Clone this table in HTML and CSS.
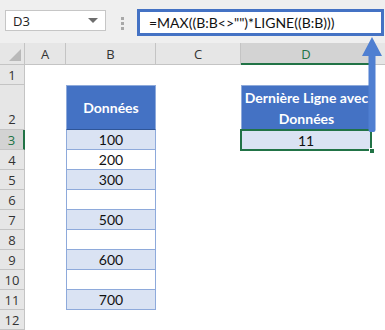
FILE: index.html
```html
<!DOCTYPE html>
<html lang="fr">
<head>
<meta charset="utf-8">
<title>Dernière ligne avec données</title>
<link rel="stylesheet" href="styles.css">
</head>
<body>
<div class="app">
  <div class="formula-bar">
    <div class="namebox">
      <span class="ref">D3</span>
      <span class="caret"></span>
    </div>
    <div class="grip"><i></i><i></i><i></i></div>
    <div class="fx">=MAX((B:B&lt;&gt;"")*LIGNE((B:B)))</div>
  </div>

  <div class="sheet">
    <!-- column headers -->
    <div class="corner"><span class="tri"></span></div>
    <div class="colhdr">A</div>
    <div class="colhdr">B</div>
    <div class="colhdr">C</div>
    <div class="colhdr sel">D</div>
    <div class="colhdr last"></div>

    <!-- row 1 -->
    <div class="rowhdr">1</div>
    <div></div><div></div><div></div><div></div><div></div>

    <!-- row 2 -->
    <div class="rowhdr bottom">2</div>
    <div></div>
    <div class="cell head top">Données</div>
    <div></div>
    <div class="cell dhead">Dernière Ligne avec<br>Données</div>
    <div></div>

    <!-- row 3 -->
    <div class="rowhdr sel">3</div>
    <div></div>
    <div class="cell band">100</div>
    <div></div>
    <div class="cell result">11<span class="handle"></span></div>
    <div></div>

    <div class="rowhdr">4</div>
    <div></div><div class="cell">200</div><div></div><div></div><div></div>

    <div class="rowhdr">5</div>
    <div></div><div class="cell band">300</div><div></div><div></div><div></div>

    <div class="rowhdr">6</div>
    <div></div><div class="cell"></div><div></div><div></div><div></div>

    <div class="rowhdr">7</div>
    <div></div><div class="cell band">500</div><div></div><div></div><div></div>

    <div class="rowhdr">8</div>
    <div></div><div class="cell"></div><div></div><div></div><div></div>

    <div class="rowhdr">9</div>
    <div></div><div class="cell band">600</div><div></div><div></div><div></div>

    <div class="rowhdr">10</div>
    <div></div><div class="cell"></div><div></div><div></div><div></div>

    <div class="rowhdr">11</div>
    <div></div><div class="cell band">700</div><div></div><div></div><div></div>

    <div class="rowhdr">12</div>
    <div></div><div></div><div></div><div></div><div></div>
  </div>

  <!-- callout arrow from the result cell up to the formula -->
  <svg class="arrow" width="22" height="96" viewBox="0 0 22 96">
    <path d="M11 0 L21 19 L14.5 19 L14.5 93 Q14.5 95 12.5 95 L9.5 95 Q7.5 95 7.5 93 L7.5 19 L1 19 Z" fill="#4f7fd1"/>
  </svg>
</div>
</body>
</html>
```

FILE: styles.css
```css
* { box-sizing: border-box; }

html, body {
  margin: 0;
  padding: 0;
  background: #ffffff;
}

.app {
  position: relative;
  width: 385px;
  height: 330px;
  overflow: hidden;
  font-family: Lato, "Open Sans", "Liberation Sans", sans-serif;
}

/* ---------- formula bar ---------- */
.formula-bar {
  height: 43px;
  background: #efefef;
  display: flex;
  align-items: flex-start;
}

.namebox {
  margin: 10px 0 0 5px;
  width: 101px;
  height: 21px;
  background: #ffffff;
  border: 1px solid #c6c6c6;
  display: flex;
  align-items: center;
  justify-content: space-between;
  padding: 0 6px 0 7px;
}

.ref {
  font-family: "Open Sans", "Noto Sans", sans-serif;
  font-size: 13px;
  color: #222;
}

.caret {
  width: 0;
  height: 0;
  border-left: 5px solid transparent;
  border-right: 5px solid transparent;
  border-top: 5px solid #6d6d6d;
  margin-right: 1px;
}

.grip {
  margin: 17px 0 0 15px;
  width: 3px;
  display: flex;
  flex-direction: column;
  gap: 2px;
}
.grip i {
  display: block;
  width: 3px;
  height: 3px;
  background: #a8a8a8;
}

.fx {
  margin: 9px 0 0 13px;
  width: 247px;
  height: 27px;
  background: #ffffff;
  border: 3px solid #4472c4;
  padding: 0 0 0 9px;
  font-family: Lato, "Open Sans", sans-serif;
  font-size: 14px;
  line-height: 21px;
  color: #111;
  white-space: nowrap;
}

/* ---------- worksheet grid ---------- */
.sheet {
  display: grid;
  grid-template-columns: 25px 41px 90px 85px 131px 1fr;
  grid-template-rows: 22px 20px 45px repeat(10, 20px);
}

.corner {
  position: relative;
  background: #e6e6e6;
  border-right: 1px solid #c4c4c4;
  border-bottom: 1px solid #c4c4c4;
}
.tri {
  position: absolute;
  right: 3px;
  bottom: 3px;
  width: 0;
  height: 0;
  border-left: 12px solid transparent;
  border-bottom: 12px solid #b9b9b9;
}

.colhdr {
  background: #e6e6e6;
  border-right: 1px solid #c4c4c4;
  border-bottom: 1px solid #c4c4c4;
  display: flex;
  align-items: center;
  justify-content: center;
  font-family: "Open Sans", "Noto Sans", sans-serif;
  font-size: 13px;
  color: #333;
  padding-top: 1px;
}
.colhdr.sel {
  background: #d3d3d3;
  color: #217346;
  border-bottom: 2px solid #217346;
}
.colhdr.last { border-right: none; }

.rowhdr {
  background: #e6e6e6;
  border-right: 1px solid #c4c4c4;
  border-bottom: 1px solid #c4c4c4;
  display: flex;
  align-items: center;
  justify-content: center;
  font-family: "Open Sans", "Noto Sans", sans-serif;
  font-size: 13px;
  color: #333;
}
.rowhdr.bottom {
  align-items: flex-end;
  padding-bottom: 1px;
}
.rowhdr.sel {
  background: #d3d3d3;
  color: #217346;
  border-right: 2px solid #217346;
}

/* ---------- data cells ---------- */
.cell {
  display: flex;
  align-items: center;
  justify-content: center;
  border-left: 1px solid #8eaadb;
  border-right: 1px solid #8eaadb;
  border-bottom: 1px solid #8eaadb;
  font-size: 14px;
  color: #111;
  background: #ffffff;
}
.cell.band { background: #dae3f3; }

.cell.head {
  background: #4472c4;
  color: #ffffff;
  font-weight: bold;
  font-size: 14px;
  border-top: 1px solid #8eaadb;
  border-bottom: 1px solid #2f5597;
}

.cell.dhead {
  background: #4472c4;
  color: #ffffff;
  font-weight: bold;
  font-size: 14px;
  line-height: 21px;
  text-align: center;
  border: 1px solid #8eaadb;
  border-bottom: none;
  white-space: nowrap;
}

.cell.result {
  position: relative;
  background: #dae3f3;
  border: 2px solid #217346;
  margin: -1px 0 -1px -1px;
}
.handle {
  position: absolute;
  right: -5px;
  bottom: -5px;
  width: 6px;
  height: 6px;
  background: #217346;
  border: 1px solid #ffffff;
}

/* ---------- overlay arrow ---------- */
.arrow {
  position: absolute;
  left: 361px;
  top: 37px;
}
```
